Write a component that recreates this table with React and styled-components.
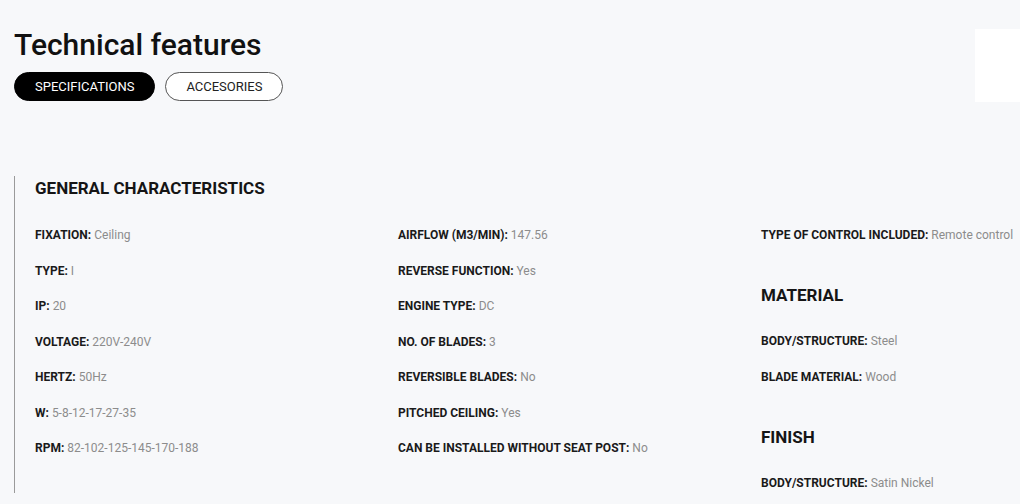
import React from "react";
import styled, { createGlobalStyle } from "styled-components";

const Global = createGlobalStyle`
  html, body { margin: 0; padding: 0; background: #f7f8fa; }
  body { font-family: Roboto, "Noto Sans", Arial, sans-serif; color: #111; }
  * { box-sizing: border-box; }
`;

const Page = styled.div`
  width: 1020px;
  height: 504px;
  overflow: hidden;
  padding-left: 14px;
`;

const Header = styled.header`
  display: flex;
  justify-content: space-between;
  align-items: flex-start;
  padding-top: 27px;
`;

const HeaderLeft = styled.div`
  display: flex;
  flex-direction: column;
`;

const Title = styled.h1`
  margin: 0;
  font-size: 30px;
  line-height: 36px;
  font-weight: 500;
  color: #111;
`;

const Tabs = styled.div`
  display: flex;
  gap: 10px;
  margin-top: 9px;
`;

const Tab = styled.button`
  height: 29px;
  padding: 0 20px;
  border-radius: 15px;
  border: 1px solid ${(p) => (p.$active ? "#000" : "#555")};
  background: ${(p) => (p.$active ? "#000" : "#fff")};
  color: ${(p) => (p.$active ? "#fff" : "#222")};
  font-family: Roboto, Arial, sans-serif;
  font-size: 13px;
  text-transform: uppercase;
  cursor: pointer;
`;

const SidePanel = styled.div`
  width: 45px;
  height: 73px;
  margin-top: 2px;
  background: #fff;
`;

const Section = styled.section`
  margin-top: 74px;
  border-left: 1px solid #9a9a9a;
  padding: 2px 0 2px 20px;
`;

const Heading = styled.h2`
  margin: ${(p) => (p.$first ? "0 0 29px" : "22.5px 0 28px")};
  font-size: 17px;
  line-height: 20px;
  font-weight: 700;
  color: #151515;
  text-transform: uppercase;
`;

const Columns = styled.div`
  display: grid;
  grid-template-columns: 363px 363px 1fr;
`;

const Column = styled.div`
  display: flex;
  flex-direction: column;
`;

const Row = styled.div`
  font-size: 12px;
  line-height: 16px;
  margin-bottom: 19.5px;
  white-space: nowrap;
  &:last-child { margin-bottom: 0; }
`;

const Label = styled.span`
  font-weight: 700;
  color: #1a1a1a;
`;

const Value = styled.span`
  color: #8c8c8c;
`;

const Item = ({ label, value }) => (
  <Row>
    <Label>{label}:</Label> <Value>{value}</Value>
  </Row>
);

const col1 = [
  ["FIXATION", "Ceiling"],
  ["TYPE", "I"],
  ["IP", "20"],
  ["VOLTAGE", "220V-240V"],
  ["HERTZ", "50Hz"],
  ["W", "5-8-12-17-27-35"],
  ["RPM", "82-102-125-145-170-188"],
];

const col2 = [
  ["AIRFLOW (M3/MIN)", "147.56"],
  ["REVERSE FUNCTION", "Yes"],
  ["ENGINE TYPE", "DC"],
  ["NO. OF BLADES", "3"],
  ["REVERSIBLE BLADES", "No"],
  ["PITCHED CEILING", "Yes"],
  ["CAN BE INSTALLED WITHOUT SEAT POST", "No"],
];

export default function App() {
  return (
    <>
      <Global />
      <Page>
        <Header>
          <HeaderLeft>
            <Title>Technical features</Title>
            <Tabs>
              <Tab $active>Specifications</Tab>
              <Tab>Accesories</Tab>
            </Tabs>
          </HeaderLeft>
          <SidePanel />
        </Header>
        <Section>
          <Heading $first>General characteristics</Heading>
          <Columns>
            <Column>
              {col1.map(([l, v]) => (
                <Item key={l} label={l} value={v} />
              ))}
            </Column>
            <Column>
              {col2.map(([l, v]) => (
                <Item key={l} label={l} value={v} />
              ))}
            </Column>
            <Column>
              <Item label="TYPE OF CONTROL INCLUDED" value="Remote control" />
              <Heading>Material</Heading>
              <Item label="BODY/STRUCTURE" value="Steel" />
              <Item label="BLADE MATERIAL" value="Wood" />
              <Heading>Finish</Heading>
              <Item label="BODY/STRUCTURE" value="Satin Nickel" />
            </Column>
          </Columns>
        </Section>
      </Page>
    </>
  );
}
